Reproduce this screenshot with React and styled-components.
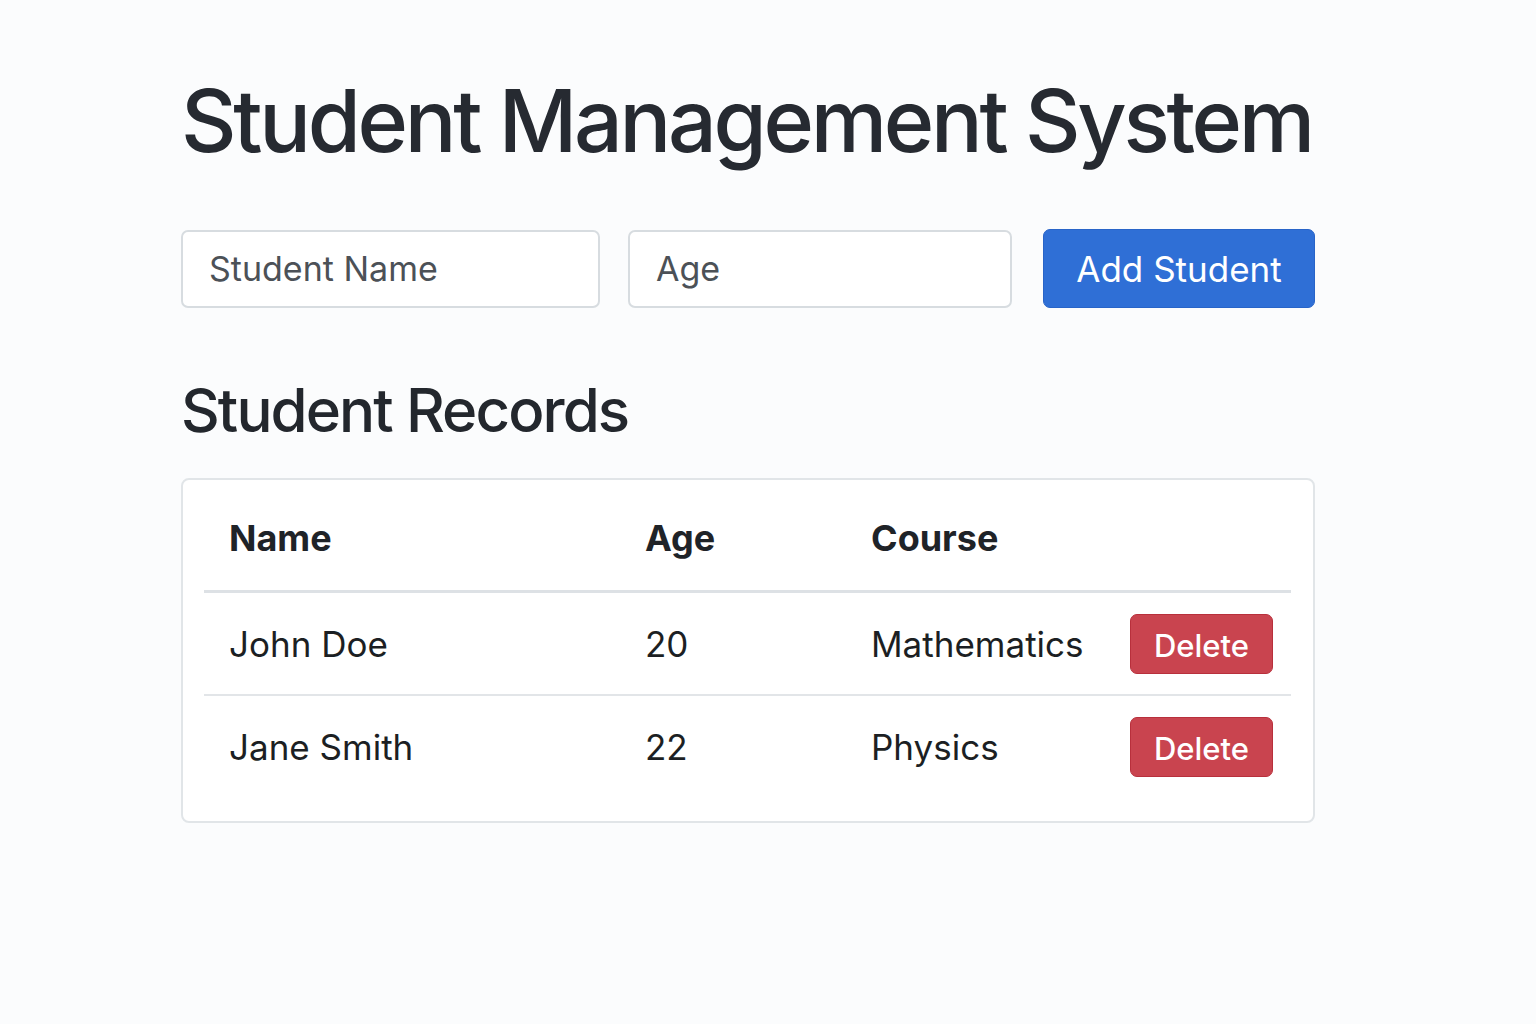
import React from "react";
import styled, { createGlobalStyle } from "styled-components";

const Global = createGlobalStyle`
  html, body { margin: 0; padding: 0; background: #fbfcfd; }
  body { font-family: Inter, "Noto Sans", sans-serif; color: #212529; }
`;

const Page = styled.main`
  width: 1134px;
  padding: 70px 0 0 181px;
`;

const Title = styled.h1`
  margin: 0;
  font-size: 86px;
  font-weight: 500;
  line-height: 1.2;
  letter-spacing: -3.3px;
  white-space: nowrap;
  color: #262a31;
`;

const Form = styled.div`
  display: flex;
  gap: 28px;
  margin-top: 56px;
  align-items: center;
`;

const Input = styled.input`
  box-sizing: border-box;
  width: ${(p) => p.$w}px;
  height: 78px;
  padding: 0 26px;
  border: 2px solid #d7dce0;
  border-radius: 7px;
  background: #fff;
  font-family: Inter, sans-serif;
  font-size: 34px;
  color: #4c5157;
  outline: none;
  &::placeholder { color: #4c5157; }
`;

const PrimaryButton = styled.button`
  box-sizing: border-box;
  margin-left: 3px;
  width: 274px;
  height: 79px;
  border: 1px solid #2864c8;
  border-radius: 7px;
  background: #2f6fd6;
  color: #fff;
  font-family: Inter, sans-serif;
  font-size: 35px;
  font-weight: 400;
`;

const SubTitle = styled.h2`
  margin: 66px 0 0;
  font-size: 60px;
  font-weight: 500;
  line-height: 1.2;
  letter-spacing: -1.9px;
  color: #23272d;
`;

const Card = styled.div`
  box-sizing: border-box;
  margin-top: 32px;
  width: 1134px;
  padding: 22px 22px 24px 21px;
  background: #fff;
  border: 2px solid #e1e5e8;
  border-radius: 8px;
`;

const Table = styled.table`
  width: 100%;
  border-collapse: collapse;
  table-layout: fixed;
`;

const Th = styled.th`
  text-align: left;
  padding: 0 25px 16px;
  height: 72px;
  font-size: 36px;
  font-weight: 700;
  color: #1f2328;
  border-bottom: 3px solid #dde1e5;
`;

const Td = styled.td`
  padding: 0 25px;
  height: 101px;
  font-size: 35px;
  font-weight: 400;
  color: #1c1f23;
  border-bottom: ${(p) => (p.$last ? "none" : "2px solid #e2e5e8")};
`;

const DangerButton = styled.button`
  box-sizing: border-box;
  margin-left: 1px;
  width: 143px;
  height: 60px;
  padding-top: 4px;
  border: 1.5px solid #b8303c;
  border-radius: 7px;
  background: #c9444f;
  color: #fff;
  font-family: Inter, sans-serif;
  font-size: 31px;
  font-weight: 500;
`;

const students = [
  { name: "John Doe", age: 20, course: "Mathematics" },
  { name: "Jane Smith", age: 22, course: "Physics" },
];

export default function App() {
  return (
    <>
      <Global />
      <Page>
        <Title>Student Management System</Title>
        <Form>
          <Input $w={419} placeholder="Student Name" />
          <Input $w={384} placeholder="Age" />
          <PrimaryButton>Add Student</PrimaryButton>
        </Form>
        <SubTitle>Student Records</SubTitle>
        <Card>
          <Table>
            <colgroup>
              <col style={{ width: 416 }} />
              <col style={{ width: 226 }} />
              <col style={{ width: 258 }} />
              <col />
            </colgroup>
            <thead>
              <tr>
                <Th>Name</Th>
                <Th>Age</Th>
                <Th>Course</Th>
                <Th />
              </tr>
            </thead>
            <tbody>
              {students.map((s, i) => (
                <tr key={s.name}>
                  <Td $last={i === students.length - 1}>{s.name}</Td>
                  <Td $last={i === students.length - 1}>{s.age}</Td>
                  <Td $last={i === students.length - 1}>{s.course}</Td>
                  <Td $last={i === students.length - 1}>
                    <DangerButton>Delete</DangerButton>
                  </Td>
                </tr>
              ))}
            </tbody>
          </Table>
        </Card>
      </Page>
    </>
  );
}
